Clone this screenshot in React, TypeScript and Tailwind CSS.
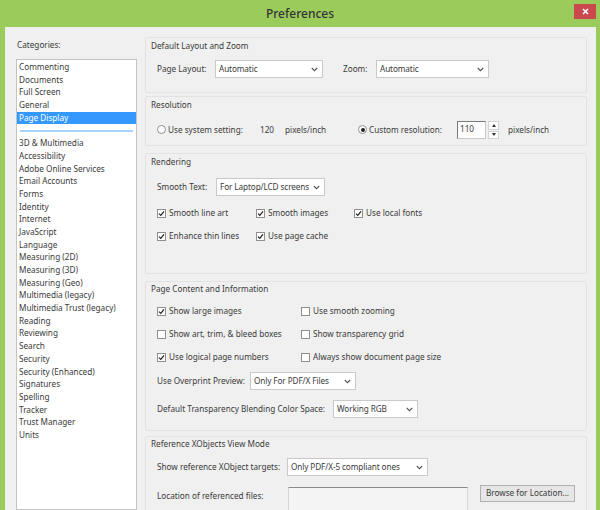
import { ReactNode } from 'react';

const topCategories = ['Commenting', 'Documents', 'Full Screen', 'General', 'Page Display'];

const moreCategories = [
  '3D & Multimedia',
  'Accessibility',
  'Adobe Online Services',
  'Email Accounts',
  'Forms',
  'Identity',
  'Internet',
  'JavaScript',
  'Language',
  'Measuring (2D)',
  'Measuring (3D)',
  'Measuring (Geo)',
  'Multimedia (legacy)',
  'Multimedia Trust (legacy)',
  'Reading',
  'Reviewing',
  'Search',
  'Security',
  'Security (Enhanced)',
  'Signatures',
  'Spelling',
  'Tracker',
  'Trust Manager',
  'Units',
];

function Chevron() {
  return (
    <svg width="7" height="5" viewBox="0 0 7 5" className="shrink-0">
      <path d="M0.8 1 L3.5 3.7 L6.2 1" fill="none" stroke="#555" strokeWidth="1.1" />
    </svg>
  );
}

function Select({ value, width }: { value: string; width: string }) {
  return (
    <div
      className={`${width} h-[18px] shrink-0 flex items-center gap-[3px] bg-white border border-[#c9c9c9] pl-[3px] pr-[4px] justify-between`}
    >
      <span className="whitespace-nowrap tracking-[-0.1px]">{value}</span>
      <Chevron />
    </div>
  );
}

function Check({ checked, label }: { checked: boolean; label: string }) {
  return (
    <div className="flex items-center h-[14px]">
      <div className="w-[9px] h-[9px] bg-white border border-[#8f8f8f] flex items-center justify-center">
        {checked && (
          <svg width="7" height="7" viewBox="0 0 7 7">
            <path d="M1 3.6 L2.8 5.4 L6 1.4" fill="none" stroke="#222" strokeWidth="1.3" />
          </svg>
        )}
      </div>
      <span className="ml-[3px] whitespace-nowrap">{label}</span>
    </div>
  );
}

function Radio({ on }: { on: boolean }) {
  return (
    <div className="w-[9px] h-[9px] rounded-full bg-white border border-[#8f8f8f] flex items-center justify-center shrink-0">
      {on && <div className="w-[4px] h-[4px] rounded-full bg-[#222]" />}
    </div>
  );
}

function Section({ title, className, children }: { title: string; className: string; children: ReactNode }) {
  return (
    <div className={`shrink-0 border border-[#e2e2e2] rounded-[2px] px-[5px] ${className}`}>
      <div className="h-[14px] flex items-center whitespace-nowrap">{title}</div>
      <div className="pl-[6px]">{children}</div>
    </div>
  );
}

export default function App() {
  return (
    <div
      className="w-[600px] h-[510px] overflow-hidden bg-[#9bcb5b] flex flex-col text-[8.2px] text-[#3a3a3a]"
      style={{ fontFamily: '"Noto Sans", "Open Sans", sans-serif' }}
    >
      {/* title bar */}
      <div className="h-[27px] shrink-0 relative flex items-center justify-center">
        <span className="text-[12px] font-medium text-[#333]">Preferences</span>
        <div className="absolute right-[4px] top-[4px] w-[22px] h-[15px] bg-[#c9494f] flex items-center justify-center">
          <svg width="7" height="7" viewBox="0 0 7 7">
            <path d="M1 1 L6 6 M6 1 L1 6" stroke="#fff" strokeWidth="1.6" />
          </svg>
        </div>
      </div>

      <div className="flex-1 min-h-0 mr-[4px] ml-[5px] bg-[#f0f0f0] flex pl-[11px] pr-[9px] overflow-hidden">
        {/* categories */}
        <div className="w-[121px] shrink-0 flex flex-col">
          <div className="h-[14px] mt-[11px] pl-[1px] flex items-center">Categories:</div>
          <div className="mt-[7px] flex-1 bg-white border border-[#c3c3c3] pt-[1px]">
            {topCategories.map((c) => (
              <div
                key={c}
                className={`h-[12.7px] leading-[12.7px] pl-[2px] whitespace-nowrap ${
                  c === 'Page Display' ? 'bg-[#3399ff] text-white' : ''
                }`}
              >
                {c}
              </div>
            ))}
            <div className="h-[12.7px] flex items-center px-[3px]">
              <div className="h-[2px] w-full bg-[#a9d4ff]" />
            </div>
            {moreCategories.map((c) => (
              <div key={c} className="h-[12.7px] leading-[12.7px] pl-[2px] whitespace-nowrap">
                {c}
              </div>
            ))}
          </div>
        </div>

        {/* settings */}
        <div className="flex-1 ml-[8px] flex flex-col">
          <Section title="Default Layout and Zoom" className="mt-[10px] h-[56px] pt-[1px]">
            <div className="mt-[7px] h-[18px] flex items-center">
              <span className="w-[58px]">Page Layout:</span>
              <Select value="Automatic" width="w-[108px]" />
              <span className="ml-[20px] w-[33px]">Zoom:</span>
              <Select value="Automatic" width="w-[113px]" />
            </div>
          </Section>

          <Section title="Resolution" className="mt-[3px] h-[50px] pt-[1px]">
            <div className="mt-[9px] h-[18px] flex items-center whitespace-nowrap">
              <div className="w-[103px] flex items-center">
                <Radio on={false} />
                <span className="ml-[2px]">Use system setting:</span>
              </div>
              <span className="w-[25px]">120</span>
              <span className="w-[73px]">pixels/inch</span>
              <div className="w-[99px] flex items-center">
                <Radio on />
                <span className="ml-[2px]">Custom resolution:</span>
              </div>
              <div className="w-[29px] h-[18px] bg-white border border-[#c9c9c9] border-t-[#7a7a7a] border-l-[#7a7a7a] pl-[2px] leading-[14px]">
                110
              </div>
              <div className="ml-[2px] w-[11px] h-[18px] flex flex-col gap-[1px]">
                <div className="flex-1 bg-white border border-[#d3d3d3] flex items-center justify-center">
                  <svg width="4" height="3" viewBox="0 0 4 3">
                    <path d="M0 3 L2 0 L4 3 Z" fill="#333" />
                  </svg>
                </div>
                <div className="flex-1 bg-white border border-[#d3d3d3] flex items-center justify-center">
                  <svg width="4" height="3" viewBox="0 0 4 3">
                    <path d="M0 0 L2 3 L4 0 Z" fill="#333" />
                  </svg>
                </div>
              </div>
              <span className="ml-[9px]">pixels/inch</span>
            </div>
          </Section>

          <Section title="Rendering" className="mt-[7px] h-[121px] pt-[1px]">
            <div className="mt-[9px] h-[18px] flex items-center">
              <span className="w-[59px]">Smooth Text:</span>
              <Select value="For Laptop/LCD screens" width="w-[109px]" />
            </div>
            <div className="mt-[10px] flex">
              <div className="w-[99px]">
                <Check checked label="Smooth line art" />
              </div>
              <div className="w-[98px]">
                <Check checked label="Smooth images" />
              </div>
              <Check checked label="Use local fonts" />
            </div>
            <div className="mt-[9px] flex">
              <div className="w-[99px]">
                <Check checked label="Enhance thin lines" />
              </div>
              <Check checked label="Use page cache" />
            </div>
          </Section>

          <Section title="Page Content and Information" className="mt-[7px] h-[150px] pt-[0px]">
            <div className="mt-[8px] flex">
              <div className="w-[144px]">
                <Check checked label="Show large images" />
              </div>
              <Check checked={false} label="Use smooth zooming" />
            </div>
            <div className="mt-[9px] flex">
              <div className="w-[144px]">
                <Check checked={false} label="Show art, trim, & bleed boxes" />
              </div>
              <Check checked={false} label="Show transparency grid" />
            </div>
            <div className="mt-[9px] flex">
              <div className="w-[144px]">
                <Check checked label="Use logical page numbers" />
              </div>
              <Check checked={false} label="Always show document page size" />
            </div>
            <div className="mt-[8px] h-[18px] flex items-center">
              <span className="w-[93px] whitespace-nowrap">Use Overprint Preview:</span>
              <Select value="Only For PDF/X Files" width="w-[106px]" />
            </div>
            <div className="mt-[10px] h-[18px] flex items-center">
              <span className="w-[176px] whitespace-nowrap">Default Transparency Blending Color Space:</span>
              <Select value="Working RGB" width="w-[85px]" />
            </div>
          </Section>

          <Section title="Reference XObjects View Mode" className="mt-[5px] h-[90px] pt-[0px]">
            <div className="mt-[7px] h-[18px] flex items-center">
              <span className="w-[130px] whitespace-nowrap">Show reference XObject targets:</span>
              <Select value="Only PDF/X-5 compliant ones" width="w-[141px]" />
            </div>
            <div className="mt-[9px] flex items-start">
              <span className="w-[131px] mt-[5px] whitespace-nowrap">Location of referenced files:</span>
              <div className="w-[180px] h-[24px] mt-[2px] bg-[#f4f4f4] border border-[#d6d6d6] border-t-[#8a8a8a]" />
              <div className="ml-[12px] w-[95px] h-[17px] bg-[#e6e6e6] border border-[#b0b0b0] flex items-center justify-center whitespace-nowrap">
                Browse for Location...
              </div>
            </div>
          </Section>
        </div>
      </div>
    </div>
  );
}
